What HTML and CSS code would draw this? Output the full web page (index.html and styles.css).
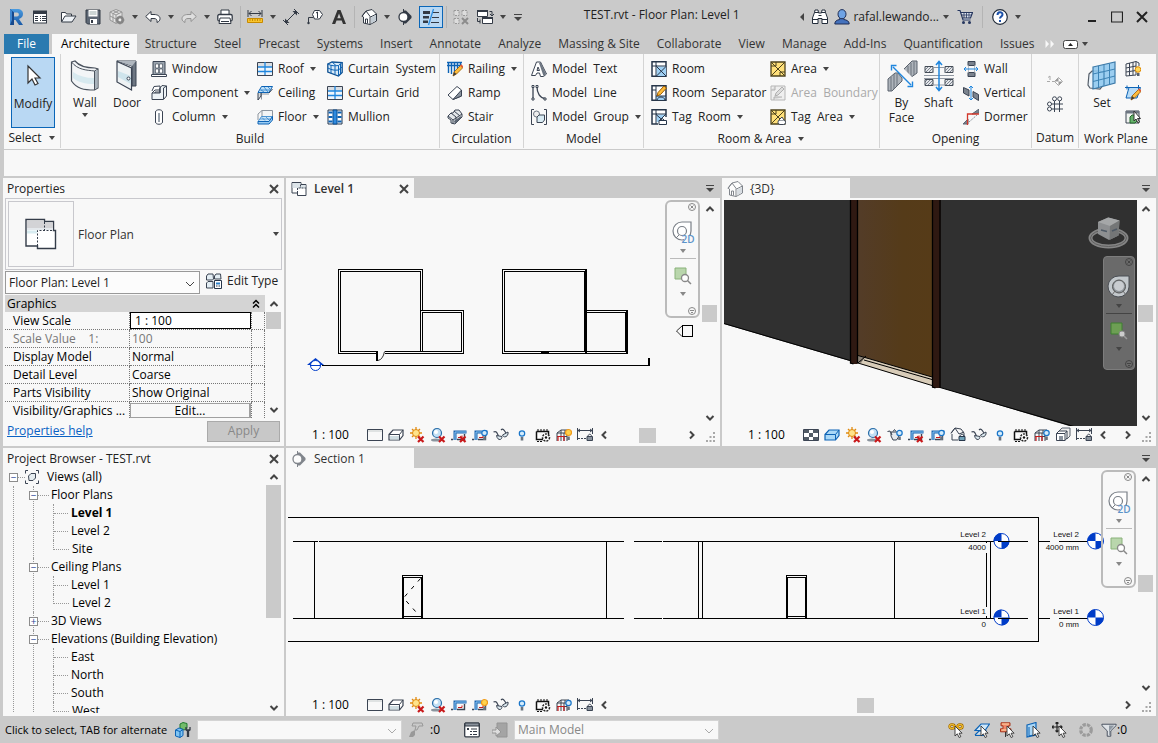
FILE: index.html
```html
<!DOCTYPE html>
<html lang="en">
<head>
<meta charset="utf-8">
<title>TEST.rvt - Floor Plan: Level 1</title>
<link rel="stylesheet" href="styles.css">
</head>
<body>
<svg class="sprite" aria-hidden="true">
  <defs>
    <linearGradient id="g-blue" x1="0" y1="0" x2="0" y2="1"><stop offset="0" stop-color="#4a9be0"/><stop offset="1" stop-color="#1b5ba8"/></linearGradient>
    <linearGradient id="g-door" x1="0" y1="0" x2="1" y2="0"><stop offset="0" stop-color="#533c28"/><stop offset="0.6" stop-color="#553b19"/><stop offset="1" stop-color="#563b18"/></linearGradient>
    <pattern id="hatch" width="3" height="3" patternUnits="userSpaceOnUse"><rect width="3" height="3" fill="#e4e6e9"/><path d="M0 3 3 0" stroke="#7c8490"/></pattern>
  </defs>

  <symbol id="caret" viewBox="0 0 8 8"><path d="M1 2h6L4 6z" fill="currentColor"/></symbol>
  <symbol id="caret-left" viewBox="0 0 8 8"><path d="M6 0v8L2 4z" fill="currentColor"/></symbol>
  <symbol id="chev-up" viewBox="0 0 10 10"><path d="M1.500 7 5 3.500 8.500 7" fill="none" stroke="currentColor" stroke-width="2"/></symbol>
  <symbol id="chev-down" viewBox="0 0 10 10"><path d="M1.500 3 5 6.500 8.500 3" fill="none" stroke="currentColor" stroke-width="2"/></symbol>
  <symbol id="chev-left" viewBox="0 0 10 10"><path d="M7 1.500 3.500 5 7 8.500" fill="none" stroke="currentColor" stroke-width="2"/></symbol>
  <symbol id="chev-right" viewBox="0 0 10 10"><path d="M3 1.500 6.500 5 3 8.500" fill="none" stroke="currentColor" stroke-width="2"/></symbol>
  <symbol id="thin-down" viewBox="0 0 10 10"><path d="M1 3 5 7 9 3" fill="none" stroke="currentColor"/></symbol>
  <symbol id="cross" viewBox="0 0 10 10"><path d="M1 1l8 8M9 1 1 9" stroke="currentColor" stroke-width="2"/></symbol>
  <symbol id="list-menu" viewBox="0 0 10 10"><path d="M1 2.500h8" stroke="currentColor"/><path d="M1 5h8L5 9z" fill="currentColor"/></symbol>
  <symbol id="grip" viewBox="0 0 10 10"><path d="M7 0h2v2H7zM7 4h2v2H7zM7 8h2v2H7zM3.500 4h2v2h-2zM3.500 8h2v2h-2zM0 8h2v2H0z" fill="#a8a8a8"/></symbol>

  <symbol id="logo" viewBox="0 0 16 18"><path d="M2 1h7c4 0 6 2 6 5s-2 4-4 5l4 6h-4L7.500 12H6v5H2zM6 4.500v4h3c2.500 0 2.500-4 0-4z" fill="url(#g-blue)"/><path d="M2 1l4 3.500V17H2z" fill="#17498c"/><path d="M2 1l2 2v9l-2 5z" fill="#3f86cf"/></symbol>
  <symbol id="props" viewBox="0 0 16 16"><rect x="1.500" y="2" width="13" height="12" fill="#fff" stroke="#333a45"/><path d="M1 2h14v3H1z" fill="#333a45"/><path d="M3 7h3v1H3zM3 9h3v1H3zM3 11h3v1H3zM8 7h1v1H8zM10 7h4v1h-4zM8 9h1v1H8zM10 9h4v1h-4zM8 11h1v1H8zM10 11h4v1h-4z" fill="#333a45"/></symbol>
  <symbol id="open" viewBox="0 0 18 16"><path d="M1.500 12.500v-9h4l1 1.500h5v2" fill="#fff" stroke="#333a45"/><path d="M1.500 13 5 7h11l-4 6z" fill="#eef2f6" stroke="#333a45"/></symbol>
  <symbol id="save" viewBox="0 0 16 16"><path d="M1 1h14v14H2.500L1 13.500z" fill="#5d6774" stroke="#333a45"/><path d="M3.500 1h9v6.500h-9z" fill="#fff"/><path d="M4.500 3h7M4.500 5h7" stroke="#9aa"/><path d="M5 10h7v5H5z" fill="#fff"/><path d="M6 11h2v3H6z" fill="#333a45"/></symbol>
  <symbol id="sync" viewBox="0 0 16 16"><path d="M7 .5 13 3v8l-6 3.500L1 11V3z" fill="#e4e4e4" stroke="#969696"/><path d="M1 3l6 3 6-3M7 6v8M4 1.500l6 3M10 1.500l-6 3v8M1 7l6 3 6-3" fill="none" stroke="#969696"/><circle cx="11" cy="11" r="3" fill="none" stroke="#858585" stroke-width="2"/><path d="M11 6.500v9M6.500 11h9M8 8l6 6M14 8l-6 6" stroke="#858585"/><circle cx="11" cy="11" r="1.200" fill="#eee"/></symbol>
  <symbol id="undo" viewBox="0 0 16 16"><path d="M6 2.500v3h3c4 0 6 2 6 4s-1 3-3 4c.5-3-1-4-3-4H6v3L.7 7.500z" fill="#fff" stroke="#333a45"/></symbol>
  <symbol id="redo" viewBox="0 0 16 16"><path d="M10 2.500v3H7c-4 0-6 2-6 4s1 3 3 4c-.5-3 1-4 3-4h3v3l5.300-5z" fill="#dedede" stroke="#939393"/></symbol>
  <symbol id="print" viewBox="0 0 16 16"><path d="M4 1h8v6H4z" fill="#fff" stroke="#333a45"/><rect x=".8" y="5.500" width="14.400" height="6.500" rx="1.500" fill="#fff" stroke="#333a45" stroke-width="1.300"/><path d="M3 9h10l1 5.500H2z" fill="#fff" stroke="#333a45"/><path d="M4 12.500h8" stroke="#333a45"/></symbol>
  <symbol id="measure" viewBox="0 0 16 16"><path d="M1 1v7M15 1v7M2 4.500h12M4.500 2 2 4.500 4.500 7M11.500 2 14 4.500 11.500 7" fill="none" stroke="#333a45"/><path d="M.500 9.500h15v4H.500z" fill="#f9c52e" stroke="#c88a00"/><path d="M3 10v2M5.500 10v2M8 10v2M10.500 10v2M13 10v2" stroke="#c88a00"/></symbol>
  <symbol id="dim" viewBox="0 0 16 16"><path d="M2.500 13.500l11-11M0 11l5 5M11 0l5 5" stroke="#333a45"/><path d="M2 14V9.500L6.500 14zM14 2H9.500L14 6.500z" fill="#333a45"/></symbol>
  <symbol id="tag" viewBox="0 0 16 16"><path d="M1.500 15V8.500h5" fill="none" stroke="#333a45"/><circle cx="1.500" cy="14" r="1.200" fill="#333a45"/><path d="M7.500 1.500h5l3 4-3 4.500h-5l-2-4.500z" fill="#fff" stroke="#333a45"/><path d="M9 4l1.500-1v6" fill="none" stroke="#333a45"/></symbol>
  <symbol id="text-a" viewBox="0 0 16 16"><path fill-rule="evenodd" d="M6.500 1h3L15 15h-3l-1.300-3.500H5.500L4.200 15H1zM8 4.500 6.300 9.300h3.500z" fill="#333"/></symbol>
  <symbol id="house" viewBox="0 0 16 16"><path d="M1 7l4-5 6-1.500L15.500 5v7L9 15.500 2.500 14V8z" fill="#fff" stroke="#333a45"/><path d="M1 7.500 5 2l4.500 6M9.500 8l6-3M9 8v7.500" fill="none" stroke="#333a45"/><path d="M10 8.500 15 6v5.500l-5 3z" fill="#c3ccd4"/><path d="M4.500 14v-4h2v4.500" fill="none" stroke="#333a45"/></symbol>
  <symbol id="section" viewBox="0 0 16 16"><path d="M7 1.500h2L14.500 7v2L9 14.500H7z" fill="#333a45"/><circle cx="6.500" cy="8" r="4.500" fill="#fff" stroke="#333a45" stroke-width="1.300"/><path d="M6.500 0v3M6.500 13v3" stroke="#333a45"/></symbol>
  <symbol id="thin" viewBox="0 0 18 16"><path d="M1 2h7v3H1zM1 7h6v2.500H1zM1 11.500h5v2.500H1z" fill="#333a45"/><path d="M11 3.500h6M10 8.500h7M9 13.500h8" stroke="#333a45"/><path d="M11.500 0 6.500 16" stroke="#2a8de0" stroke-width="1.300"/></symbol>
  <symbol id="hidden-win" viewBox="0 0 16 16"><path d="M1 1.500h5v5H1zM9 1.500h5v5H9zM1 9.500h5v5H1z" fill="#ddd" stroke="#999" stroke-dasharray="2 1"/><path d="M9 9l6 6M15 9l-6 6" stroke="#8c8c8c" stroke-width="2"/></symbol>
  <symbol id="switch-win" viewBox="0 0 18 16"><path d="M1.500 1.500h10v6h-10z" fill="#fff" stroke="#333a45"/><path d="M1 1h11v2H1z" fill="#333a45"/><path d="M6.500 8.500h10v6h-10z" fill="#fff" stroke="#333a45"/><path d="M6 8h11v2H6z" fill="#333a45"/><path d="M13.500 2.500H16V6M14 5l2 2 2-2M4 12.500H1.500V9M4 10.500v4" fill="none" stroke="#333a45"/></symbol>
  <symbol id="binoc" viewBox="0 0 16 16"><path d="M2.500 3.500 3 1h3l.5 3h3L10 1h3l.5 2.500L15.500 9v5.500h-5.500V9.500H6v5H.500V9z" fill="#fff" stroke="#222c3a"/><path d="M.5 10.500H6M10 10.500h5.500M2.500 3.500h4M9.500 3.500h4M6.500 6.500h3" stroke="#222c3a"/></symbol>
  <symbol id="user" viewBox="0 0 16 16"><path d="M.8 15c0-3 2-4 5-4.500V9h4v1.500c3 .5 5.400 1.500 5.400 4.500z" fill="#4472bd" stroke="#1f2d55"/><ellipse cx="8" cy="5.200" rx="4" ry="4.600" fill="#6fa3e4" stroke="#1f2d55"/></symbol>
  <symbol id="cart" viewBox="0 0 16 16"><path d="M.500 1.500h2.500l3 9.500h7.500M3.500 3.500h12l-2 5.500H5.500" fill="#dfe7f2" stroke="#26365e" stroke-width="1.200"/><path d="M4.500 6h10M7 4v5M9.500 4v5M12 4v5" stroke="#26365e" stroke-width=".8"/><circle cx="6.500" cy="13.500" r="1.500" fill="#26365e"/><circle cx="12.500" cy="13.500" r="1.500" fill="#26365e"/></symbol>
  <symbol id="help" viewBox="0 0 16 16"><circle cx="8" cy="8" r="7.300" fill="#fff" stroke="#222c3a" stroke-width="1.200"/><path d="M5.500 6c0-3.500 5-3.500 5-.5 0 2-2.500 2-2.500 4" fill="none" stroke="#1b50a8" stroke-width="2"/><path d="M7 11h2v2H7z" fill="#1b50a8"/></symbol>
  <symbol id="w-min" viewBox="0 0 12 12"><path d="M2 10h8" stroke="#222" stroke-width="2"/></symbol>
  <symbol id="w-max" viewBox="0 0 12 12"><path d="M.500 1h11v10H.500z" fill="none" stroke="#222" stroke-width="1.200"/></symbol>
  <symbol id="w-close" viewBox="0 0 12 12"><path d="M1 1l10 10M11 1 1 11" stroke="#222" stroke-width="2"/></symbol>
  <symbol id="more" viewBox="0 0 10 10"><path d="M.5 1 4 5 .5 9M5.500 1 9 5 5.500 9" fill="#f8f8f8"/></symbol>
  <symbol id="collapse" viewBox="0 0 15 9"><rect x=".5" y=".5" width="14" height="8" rx="2" fill="#fff" stroke="#444"/><path d="M5 6h5L7.500 3z" fill="#222"/></symbol>

  <symbol id="cursor" viewBox="0 0 32 32"><path d="M11 5v17l4-4 3 6 3-1.500-3-5.500h5z" fill="#fff" stroke="#333" stroke-width="1.200"/></symbol>
  <symbol id="wall" viewBox="0 0 32 32"><path d="M2.500 2 6 1c5 6 12 7 20 7l3 1v19l-3.500 2C15 30 8 29 2.500 21z" fill="#f3f5f7" stroke="#4a525d" stroke-width="1.200"/><path d="M2.500 2C9 10 17 10 25.500 11v19M25.500 11 29 9" fill="none" stroke="#4a525d"/><path d="M26 11.500l2.500-1.500v17.500L26 29z" fill="#a9b3bc"/><path d="M4 12c6 4 13 6 21 6v6c-9 0-16-2-21-6z" fill="#d7e9ef"/></symbol>
  <symbol id="door" viewBox="0 0 32 32"><path d="M6 1h19v25h-4V6z" fill="#6d7682" stroke="#3b4453"/><path d="M6 1h19l-4 5z" fill="#b0b7bf"/><path d="M6 1.500 20.500 8v22L6 22z" fill="#eef2f4" stroke="#3b4453" stroke-width="1.200"/><path d="M7 11l13 5v8L7 17z" fill="#cfe4ec"/><circle cx="17.500" cy="18.500" r="1.500" fill="#fff" stroke="#3b4453"/></symbol>
  <symbol id="window" viewBox="0 0 16 16"><path d="M2 .5h12v13H2z" fill="#9ba4ae" stroke="#3b4453"/><path d="M4.500 3h3v4h-3zM8.500 3h3v4h-3zM4.500 8h3v4h-3zM8.500 8h3v4h-3z" fill="#fff" stroke="#3b4453" stroke-width=".6"/><path d="M.500 13.500h15v2H.500z" fill="#fff" stroke="#3b4453"/></symbol>
  <symbol id="component" viewBox="0 0 16 16"><path d="M1 6l2-4.500 6-.5v6H4v3" fill="#fff" stroke="#3b4453"/><path d="M9 3l2-2.500 4.500.5v10l-3 3.500H1V8h8z" fill="#eef3f6" stroke="#3b4453"/><path d="M9 8V3M12.500 14V3l3-2M1 8l3-3h5" fill="none" stroke="#3b4453"/></symbol>
  <symbol id="column" viewBox="0 0 16 16"><path d="M4.500 3c0-3 7-3 7 0v10c0 3-7 3-7 0z" fill="#fff" stroke="#3b4453"/><path d="M7 4h2v9H7z" fill="#9aa3ad"/></symbol>
  <symbol id="roof" viewBox="0 0 16 16"><path d="M.500 1.500h15v13H.500z" fill="#eff5fb" stroke="#3b4453"/><path d="M1 2h14v4H1z" fill="#d9dee3"/><path d="M8 1v13M1 6h14M1 10.500h14" stroke="#1f86de" stroke-width="1.300"/></symbol>
  <symbol id="ceiling" viewBox="0 0 16 16"><path d="M4.500 7v7.500M1 14.500 4.500 9H12" fill="none" stroke="#8d959e"/><path d="M4.500 1.500h11L12 7.500H1z" fill="#bfe0f8" stroke="#0d63b5"/><path d="M1 8v7l3-4V8M12 8l3.500-4" fill="#d5dade" stroke="#3b4453"/><path d="M4 5l3 2M7 2l4 5M11 2l2 2M3 5h10" stroke="#2a7fc9" stroke-width=".8"/></symbol>
  <symbol id="floor" viewBox="0 0 16 16"><path d="M5 8V1.500h10.500V8" fill="#f3f5f6" stroke="#8d959e"/><path d="M5 1.500 1 5v6" fill="none" stroke="#8d959e"/><path d="M4.500 7.500h11L12 12.500H1z" fill="#cfe7f9" stroke="#2a7fc9" stroke-width=".8"/><path d="M1 12.500v2.500h11l3.500-4V7.500L12 12.500z" fill="#9ccdf3" stroke="#0d63b5"/><path d="M5 8.500l3 3M9 8l3 3M3 10h10" stroke="#2a7fc9" stroke-width=".7"/></symbol>
  <symbol id="curtain-system" viewBox="0 0 16 16"><path d="M.8 3 5 1l10.200.5v10L11.500 15 .8 11z" fill="#d9ebf9" stroke="#0d4f90" stroke-width="1.300"/><path d="M.8 3C4 5 8 5 11.500 4.500V15M11.500 4.500 15 1.500M4 4v8.500M8 5v8.500M1 7c3 2 7 2.500 10.500 2L15 6M13.500 3v10M5 1l4 3.500" fill="none" stroke="#0d63b5"/></symbol>
  <symbol id="mullion" viewBox="0 0 16 16"><path d="M1 1h14v14H1z" fill="#fff" stroke="#22344c"/><path d="M6 1h4v14H6z" fill="#2f8be0" stroke="#0d4f90"/><path d="M1.500 3.500h4M10.500 3.500h4M1.500 8h4M10.500 8h4M1.500 12.500h4M10.500 12.500h4" stroke="#0d63b5" stroke-width="2"/></symbol>
  <symbol id="pencil" viewBox="0 0 16 16"><path d="M6 15l1-4 6.500-6.500 2.500 2L9.500 13z" fill="#ffbd3c" stroke="#9a5b00" stroke-width=".8"/><path d="M6 15l1-4 2.500 2z" fill="#3b3b3b"/><path d="M13 4.500l1.300-1.200 2 2L15 7z" fill="#e05a3a"/></symbol>
  <symbol id="railing" viewBox="0 0 16 16"><path d="M0 1.500h15M0 4.500h15M1.500 2v10M4.500 2v11M7.500 2v9M10.500 2v6M13.500 2v4" stroke="#0d63b5" stroke-width="1.400"/><use href="#pencil"/></symbol>
  <symbol id="ramp" viewBox="0 0 16 16"><path d="M1 10 10 1.500 14.500 5v6L6 14.500z" fill="#fff" stroke="#3b4453"/><path d="M6 14.500 14.500 5v6z" fill="#8a939e" stroke="#3b4453"/></symbol>
  <symbol id="stair" viewBox="0 0 16 16"><path d="M1 7l3-3h2l2-3h4l3 4v3l-7 7-4-1v-3l-3-2z" fill="#e3e7ea" stroke="#3b4453"/><path d="M4 4l5 4M1 7l5 4M7 2l6 5M6 11l9-6M9 8v4M6 11v4" stroke="#3b4453"/><path d="M7 12l7-5v2l-6 6z" fill="#5d6774"/></symbol>
  <symbol id="model-text" viewBox="0 0 16 16"><path fill-rule="evenodd" d="M5.500 1h4l6 12-3 2.500h-3L8.500 12H6l-1.500 2.500H.500zM7 6l-1 3.500h2.500z" fill="#fff" stroke="#3b4453"/><path d="M9.500 1.500 15 13l-2.500 2L8 2z" fill="#6d7682"/></symbol>
  <symbol id="model-line" viewBox="0 0 16 16"><path d="M2 2.500V13M6 2c0 6 3 11 8 11.500" fill="none" stroke="#3b4453" stroke-width="1.300"/><path d="M1 .5h2v2H1zM1 13h2v2H1zM5 .5h2v2H5zM13 13h2v2h-2z" fill="#fff" stroke="#3b4453"/></symbol>
  <symbol id="model-group" viewBox="0 0 16 16"><path d="M3 .500H.500v15H3M13 .500h2.500v15H13" fill="none" stroke="#3b4453"/><circle cx="5.500" cy="5" r="3" fill="#eee" stroke="#6d7682"/><path d="M6 8l2-2h5.500v5l-2 2.500H6z" fill="#d9ebf3" stroke="#3b4453"/></symbol>
  <symbol id="room" viewBox="0 0 16 16"><path d="M1 .8h14v14.400H1z" fill="#fff" stroke="#27364a" stroke-width="1.500"/><path d="M5.500 5.500H15V15H5.500z" fill="#9fd0f4"/><path d="M5 1v14M1 5h5M5 5h10M5.500 5.500 15 15M15 5.500 5.500 15" stroke="#27364a"/></symbol>
  <symbol id="room-sep" viewBox="0 0 16 16"><path d="M1 .8h14v14.400H1z" fill="#fff" stroke="#27364a" stroke-width="1.500"/><path d="M5 11h9v4H5z" fill="#9fd0f4"/><path d="M5 1v14M1 5h4M5 11h10M6 15c1-4 7-4 8 0" fill="none" stroke="#27364a"/><path d="M6 11l1-3.500L13 1l2.500 2L9.500 9.500z" fill="#ffbd3c" stroke="#9a5b00"/></symbol>
  <symbol id="tag-room" viewBox="0 0 16 16"><path d="M7 15H1V.8h14V8" fill="#fff" stroke="#27364a" stroke-width="1.500"/><path d="M5.500 5.500H15l-7 7-2.500 1z" fill="#9fd0f4"/><path d="M5 1v14M1 5h5M5 5h10M5 5.500l7 6M15 5 8 12" stroke="#27364a"/><path d="M8 11.500h7.500v4H8zM10 11.500l1.500-2 2 2" fill="#fff" stroke="#27364a"/></symbol>
  <symbol id="area" viewBox="0 0 16 16"><path d="M1 1h14v14H1z" fill="#ffe07a" stroke="#4d431d" stroke-width="1.300"/><path d="M1 1l14 14M15 1 1 15M1 5h5V1M15 11h-5v4" fill="none" stroke="#4d431d"/></symbol>
  <symbol id="area-b" viewBox="0 0 16 16"><path d="M1 1h14v14H1z" fill="#efefef" stroke="#b5b5b5"/><path d="M1 5h4V1M4 15v-3h8M5 11l1-3 6-6 2 2-6 6z" fill="#ddd" stroke="#b0b0b0"/></symbol>
  <symbol id="tag-area" viewBox="0 0 16 16"><path d="M1 1h14v14H1z" fill="#ffe07a" stroke="#4d431d" stroke-width="1.300"/><path d="M1 1l12 12M15 1 1 15M1 5h5V1" fill="none" stroke="#4d431d"/><rect x="8" y="11" width="7.500" height="4.500" rx="2" fill="#fff" stroke="#3b4453"/><path d="M9 11l3-3 2 3" fill="#fff" stroke="#3b4453"/></symbol>
  <symbol id="by-face" viewBox="0 0 32 32"><path d="M18 12V9l8-8h5v12l-7 5zM2 31V19l7-6h3l4 5v3L6 31z" fill="#aeb4bb" stroke="#59616c"/><path d="M22 6v11M25 3v14M28 2v13M5 17v14M8 14v15M11 14v12" stroke="#6b737d"/><path d="M13 12l4-4 10 10-5 5z" fill="#f8f8f8"/><path d="M7 7l18 18M5.500 10.500v-5h5M21.500 26.500h5v-5" fill="none" stroke="#1f86de" stroke-width="1.400"/></symbol>
  <symbol id="shaft" viewBox="0 0 32 32"><path d="M2 6.500h8v6H2zM22 6.500h8v6h-8zM2 19.500h8v6H2zM22 19.500h8v6h-8z" fill="url(#hatch)" stroke="#444c57"/><path d="M10 7v6M22 7v6M1 15.500h30M1 18.500h30M10 7.500h12M10 25h12" stroke="#9299a3"/><path d="M16 2v28M13 5l3-3.500L19 5M13 27l3 3.500 3-3.500" fill="none" stroke="#1f86de" stroke-width="1.500"/></symbol>
  <symbol id="op-wall" viewBox="0 0 16 16"><path d="M5 .500h7v4H5zM5 11.500h7v4H5z" fill="#7b838e" stroke="#3b4453"/><path d="M5.500 4.500v7M11.500 4.500v7" stroke="#b8bec5"/><path d="M1 8h14M3 6 1 8l2 2M13 6l2 2-2 2" fill="none" stroke="#1f86de"/></symbol>
  <symbol id="op-vert" viewBox="0 0 16 16"><path d="M.500 2.500 6 5v6L.500 8zM10 6.500l5.500 3v6L10 12z" fill="#7b838e" stroke="#3b4453"/><path d="M8 1v14M6 3l2-2 2 2M6 13l2 2 2-2" fill="none" stroke="#1f86de"/></symbol>
  <symbol id="dormer" viewBox="0 0 16 16"><path d="M0 15l5-5v5zM9 5l7-5v4z" fill="#7b838e" stroke="#5d6774"/><path d="M4.500 16V5H16" fill="none" stroke="#d2372a" stroke-width="1.300"/><path d="M6 13l8-7" stroke="#8a929c" stroke-dasharray="2 1"/></symbol>
  <symbol id="level" viewBox="0 0 16 16"><path d="M1 5.500 3 4v4M0 9.500h3M5 9.500h3" fill="none" stroke="#aaa"/><path d="M11.500 5.500 15.500 9.500l-4 4-4-4z" fill="#fff" stroke="#aaa"/><path d="M11.500 5.500v4h-4zM11.500 13.500v-4h4z" fill="#999"/></symbol>
  <symbol id="grid-i" viewBox="0 0 16 16"><path d="M7.500 5v11M12.500 5v11M4 8h12M4 13h12" stroke="#3b4453"/><circle cx="7.500" cy="2.800" r="2" fill="#fff" stroke="#3b4453"/><circle cx="12.700" cy="2.800" r="2" fill="#fff" stroke="#3b4453"/><circle cx="2.500" cy="8" r="2" fill="#fff" stroke="#3b4453"/><circle cx="2.500" cy="13" r="2" fill="#fff" stroke="#3b4453"/></symbol>
  <symbol id="set" viewBox="0 0 32 32"><path d="M3 14l3-3h8l4 2v11l-4 5-10-1-2-3z" fill="#eaf3fa" stroke="#555e69" stroke-width="1.200"/><path d="M7 7 29 2v21L7 29z" fill="#8cc7ef" fill-opacity=".85" stroke="#3d7aa8" stroke-width="1.200"/><path d="M12.500 6v21.500M18 5v21M23.500 3.500V25M7 14l22-5M7 21.500l22-5.500" stroke="#3c83b5"/></symbol>
  <symbol id="wp-show" viewBox="0 0 16 16"><path d="M1 3l10-2.500V14L1 15zM4.500 2v13M8 1v13M1 7l10-2M1 11l10-1.500M11 .5 14 2v3" fill="none" stroke="#3b4453"/><circle cx="13" cy="8.500" r="2.800" fill="#ffd95a" stroke="#e08a00"/><path d="M12 12h2.500v3H12z" fill="#59616c"/></symbol>
  <symbol id="wp-ref" viewBox="0 0 16 16"><path d="M4 2.500h11.500L12 13H1z" fill="#b7dcf7" stroke="#0d63b5"/><path d="M2 .500v4M0 2.500h4M13.500 0v4" stroke="#0d63b5"/><use href="#pencil"/></symbol>
  <symbol id="wp-view" viewBox="0 0 16 16"><path d="M1 2h13v12H1z" fill="#f0f3f0" stroke="#3b4453"/><path d="M1 2h13v2.500H1z" fill="#6d7682"/><path d="M5 8l2-2h5v6l-2 2H5z" fill="#67b36c" stroke="#23662b"/><path d="M9 2v10l2-2 2 4 1.500-1-2-3.500h3z" fill="#fff" stroke="#333"/></symbol>

  <symbol id="floorplan" viewBox="0 0 16 16"><path d="M1 1.500h9v2h5v11H6.500V12H1z" fill="#fff" stroke="#3b4453"/><path d="M1.500 2h8v2h5v3h-13z" fill="#dce4e9"/><path d="M6.500 12V7h8.500M9.500 3.500V7" fill="none" stroke="#3b4453" stroke-dasharray="2 1"/></symbol>
  <symbol id="floorplan-lg" viewBox="0 0 32 32"><path d="M1 1.500h18.500v2h9v9h2V30.500H12.500V28H1z" fill="#fff" stroke="#343c49" stroke-width="1.400"/><path d="M2 2.500h17v2h9V10H2z" fill="#d3d3d6"/><path d="M2 10h26v2H2z" fill="#e4e8ec"/><path d="M2 12.500h10v3H2z" fill="#d8ecf1"/><path d="M12.500 28V12.500H30M19.500 4v8" fill="none" stroke="#343c49" stroke-dasharray="2 1.500"/></symbol>
  <symbol id="edit-type" viewBox="0 0 16 16"><path d="M.500 3 2 1h5l.5 5-1 1H.500zM8.500 3 10 1h4.500l.5 5H8.500zM.500 10 2 8.500h5V15H.500z" fill="#e4eef4" stroke="#3b4453"/><path d="M8.500 7.500h7v8h-7z" fill="#fff" stroke="#27364a"/><path d="M10 9.500h4v2h-4z" fill="#2a7fc9"/><path d="M10 13h4" stroke="#27364a" stroke-dasharray="1 .5"/></symbol>
  <symbol id="views-root" viewBox="0 0 14 14"><path d="M3 .500H.500v3M11 .500h2.500v3M3 13.500H.500v-3M11 13.500h2.500v-3" fill="none" stroke="#3b4453"/><path d="M3.500 6 6 3.500h4.500V8L8 10.500H4z" fill="#e6edf0" stroke="#3b4453"/></symbol>
  <symbol id="dbl-up" viewBox="0 0 8 10"><path d="M1 4.500 4 1.500l3 3M1 8.500l3-3 3 3" fill="none" stroke="#000" stroke-width="1.500"/></symbol>

  <symbol id="redx" viewBox="0 0 16 16"><path d="M9 9.500l5.500 5.500M14.500 9.500 9 15" stroke="#c8191b" stroke-width="2.200"/></symbol>
  <symbol id="bulb-s" viewBox="0 0 16 16"><circle cx="12.500" cy="6" r="2.700" fill="#d5ecfb" stroke="#1875c9" stroke-width="1.200"/><path d="M11.200 9.500h2.600v3.500h-2.600z" fill="#69727d"/></symbol>
  <symbol id="bulb-y" viewBox="0 0 16 16"><circle cx="12.500" cy="5.500" r="3" fill="#ffd34d" stroke="#f09a1a" stroke-width="1.200"/><path d="M11.200 9.500h2.600v3.500h-2.600z" fill="#69727d"/></symbol>
  <symbol id="v-detail" viewBox="0 0 16 16"><path d="M.500 2.500h15v11H.500z" fill="#f8f8f8" stroke="#3b4453"/><path d="M1 3h14v2H1z" fill="#dfe2e2"/></symbol>
  <symbol id="v-fine" viewBox="0 0 16 16"><path d="M.500 2.500h15v11H.500z" fill="#fff" stroke="#3b4453"/><path d="M1 3h5v3H1zM10 3h5v3h-5zM6 6h4v4H6zM1 10h5v3H1zM10 10h5v3h-5z" fill="#535c67"/></symbol>
  <symbol id="v-style" viewBox="0 0 16 16"><path d="M1 7.500 5 3h10v5.500L11.500 13H1z" fill="#fff" stroke="#3b4453" stroke-width="1.200"/><path d="M1 7.500h10.500V13M11.500 7.500 15 3" fill="none" stroke="#3b4453"/><path d="M2 9h9v3.500H2z" fill="#cfdde2"/></symbol>
  <symbol id="v-style-b" viewBox="0 0 16 16"><path d="M1 7.500 5 3h10v5.500L11.500 13H1z" fill="#a9d8f7" stroke="#0d63b5" stroke-width="1.200"/><path d="M1 7.500h10.500V13M11.500 7.500 15 3" fill="none" stroke="#0d63b5"/></symbol>
  <symbol id="v-sun" viewBox="0 0 16 16"><path d="M7 0v12M1 6h12M3 2l8 8M11 2l-8 8" stroke="#e08a10" stroke-width="1.300"/><circle cx="7" cy="6" r="3.500" fill="#ffe48a" stroke="#e08a10"/><use href="#redx"/></symbol>
  <symbol id="v-shadow" viewBox="0 0 16 16"><ellipse cx="6" cy="13" rx="5" ry="1.500" fill="#8b949e"/><circle cx="7" cy="6" r="4.500" fill="#c3e0f5" stroke="#2b6ea8" stroke-width="1.200"/><circle cx="6" cy="5" r="2" fill="#fff"/><use href="#redx"/></symbol>
  <symbol id="v-crop" viewBox="0 0 16 16"><path d="M4 13V5h11.500" fill="none" stroke="#1b64b0" stroke-width="3"/><path d="M4 13V5h11" fill="none" stroke="#8fcaf5"/><path d="M0 12.500h2M6 12.500h7.500V7" fill="none" stroke="#3b4453" stroke-width="1.400"/><path d="M7 10.500h4v-2" fill="none" stroke="#c8191b"/></symbol>
  <symbol id="v-crop-x" viewBox="0 0 16 16"><use href="#v-crop"/><use href="#redx"/></symbol>
  <symbol id="v-crop-b" viewBox="0 0 16 16"><use href="#v-crop"/><use href="#bulb-s"/></symbol>
  <symbol id="v-crop-y" viewBox="0 0 16 16"><use href="#v-crop"/><use href="#bulb-y"/></symbol>
  <symbol id="v-glasses" viewBox="0 0 16 16"><path d="M.500 5c3-1.500 3.500 1 5 4M8 3c2-2 3 0 5 3" fill="none" stroke="#3b4453" stroke-width="1.200"/><path d="M3.500 8.500 9 9.500c0 4-4.500 4.500-5.500-1zM9.500 8l5.500-3c1 4-4 7-5.500 3z" fill="#dbe8ee" stroke="#3b4453"/></symbol>
  <symbol id="v-bulb" viewBox="0 0 16 16"><circle cx="8" cy="6.500" r="2.700" fill="#d5ecfb" stroke="#1875c9" stroke-width="1.200"/><path d="M6.700 10h2.600v3.500H6.700z" fill="#69727d"/></symbol>
  <symbol id="v-temp" viewBox="0 0 16 16"><path d="M1.500 4.500h12V8M1.500 4.500v8H8" fill="#fff" stroke="#111" stroke-width="1.500"/><path d="M2 3h12M2 14.500h6" stroke="#111" stroke-dasharray="2 1"/><circle cx="11" cy="10.500" r="3.500" fill="#fff" stroke="#222" stroke-width="1.500" stroke-dasharray="2 1"/><circle cx="11" cy="10.500" r="1.200" fill="#111"/></symbol>
  <symbol id="v-anal" viewBox="0 0 16 16"><path d="M1 14V6l4-3h8l-2 3v8M5 6v8M8 6v8M1 6h10M1 9.500h10M5 3v3M9 3v3" fill="none" stroke="#3b4453"/><path d="M2 14V9.500h6V14" fill="none" stroke="#c8191b" stroke-width="1.200"/></symbol>
  <symbol id="v-anal-b" viewBox="0 0 16 16"><use href="#v-anal"/><use href="#bulb-s"/></symbol>
  <symbol id="v-anal-y" viewBox="0 0 16 16"><use href="#v-anal"/><use href="#bulb-y"/></symbol>
  <symbol id="v-constr" viewBox="0 0 16 16"><path d="M.500 1v12M15.500 1v6M1 3.500h14M3 2 1 3.500 3 5M13 2l2 1.500L13 5" fill="none" stroke="#3b4453"/><path d="M1 11.500h8" stroke="#3b4453" stroke-dasharray="2 1"/><path d="M10 9.500h5.500v4H10z" fill="#8a939e" stroke="#3b4453"/><path d="M11 9.500c0-3 3.500-3 3.500 0" fill="none" stroke="#3b4453"/></symbol>
  <symbol id="v-render" viewBox="0 0 16 16"><path d="M.500 4.500 3 4l2 4M4 5h7l.5 5-2 3H6L4 9zM6 4.500l1.500-2 1.500 2" fill="#e6e9ec" stroke="#3b4453"/><use href="#bulb-s"/></symbol>
  <symbol id="v-lock" viewBox="0 0 16 16"><path d="M1 6l4-5 6 1 3 4v5M2 7v6h6M1 6.500 5 1l4 6M9 7l5-2" fill="none" stroke="#3b4453"/><path d="M9 9.500h6v4H9z" fill="#6fa2b8" stroke="#27364a"/><path d="M10 9.500c0-3 4-3 4 0" fill="none" stroke="#27364a"/></symbol>
  <symbol id="v-disp" viewBox="0 0 16 16"><path d="M4 4l3-3h8v8l-3 3" fill="#eee" stroke="#59616c"/><path d="M1.500 6.500 4 4h8v7l-2 2.500H1.500z" fill="#fff" stroke="#3b4453"/><path d="M1.500 6.500H10v7M10 6.500 12 4" fill="none" stroke="#3b4453"/><path d="M4 9h4v4H4z" fill="#8a939e"/></symbol>

  <symbol id="wheel" viewBox="0 0 24 24"><path d="M11 2h9v9a9 9 0 1 1-9-9z" fill="#fff" stroke="#7b8088" stroke-width="1.200"/><circle cx="11" cy="11" r="4.500" fill="#fff" stroke="#7b8088" stroke-width="1.200"/><path d="M8 15l-3 3" stroke="#7b8088"/><path d="M13 15h11v9H13z" fill="#f8f8f8"/></symbol>
  <symbol id="wheel-3d" viewBox="0 0 24 24"><path d="M12 1h10v11A10.500 10.500 0 1 1 12 1z" fill="#c3c8cc" stroke="#4b4f55"/><circle cx="12" cy="11.500" r="6.500" fill="#8f959b" stroke="#555"/><circle cx="12" cy="11" r="5" fill="#c9ccd0"/><path d="M8 16l-3 4M16 16l3 4" stroke="#666"/></symbol>
  <symbol id="zoomregion" viewBox="0 0 18 18"><path d="M1 1h11v11H1z" fill="#b9d6ac" stroke="#8ab27a"/><circle cx="11" cy="11" r="3.500" fill="#fff" stroke="#888" stroke-width="1.300"/><path d="M13.500 13.500l3.500 3.500" stroke="#888" stroke-width="1.500"/></symbol>
  <symbol id="zoomregion-d" viewBox="0 0 18 18"><path d="M1 1h11v11H1z" fill="#6d9e54" stroke="#3f7f31"/><circle cx="12" cy="12" r="3" fill="#ccc" stroke="#888"/><path d="M14 14l3 3" stroke="#999" stroke-width="1.500"/></symbol>
  <symbol id="nav-x" viewBox="0 0 8 8"><circle cx="4" cy="4" r="3.500" fill="none" stroke="currentColor"/><path d="M2.500 2.500l3 3M5.500 2.500l-3 3" stroke="currentColor"/></symbol>
  <symbol id="nav-min" viewBox="0 0 8 8"><circle cx="4" cy="4" r="3.500" fill="none" stroke="currentColor"/><path d="M2 3.500h4M3 5.500h2" stroke="currentColor"/></symbol>

  <symbol id="worksets" viewBox="0 0 16 16"><path d="M5 2l3-1.500 4 1v5L9 8 5 6z" fill="#72bb6b" stroke="#1f7a2e"/><path d="M.500 8 4 6l4 1.500v6L5 15.500.500 14z" fill="#7fc4f2" stroke="#0d63b5"/><path d="M.500 8 5 9.500 8 7.500M5 9.500v6" fill="none" stroke="#0d63b5"/><path d="M11 5v3l1.500 1v6M15 5v3l-1.500 1v6M11 8h4" fill="none" stroke="#333a45" stroke-width="1.300"/></symbol>
  <symbol id="editable" viewBox="0 0 16 16"><path d="M5 1h9l1 3h-4l-2 4H7l1-4H4z" fill="#c9c9c9" stroke="#999"/><path d="M1 15l2-5 4-2v5l-2 2z" fill="#999"/></symbol>
  <symbol id="options" viewBox="0 0 16 16"><rect x=".7" y="1.200" width="14.600" height="13.600" rx="1" fill="#fff" stroke="#333a45" stroke-width="1.300"/><path d="M1 1h14v3H1z" fill="#8a929c" stroke="#333a45"/><path d="M3 6h2v2H3zM6 9h2v1H6zM6 12h2v1H6zM7 6.500h6v1H7zM9 9h4v1H9zM9 12h4v1H9z" fill="#333a45"/></symbol>
  <symbol id="pick-opt" viewBox="0 0 16 16"><path d="M5 1h10v14H5z" fill="#a4a4a4" stroke="#949494"/><path d="M0 8h4V5l5 5-5 4v-3H0z" fill="#ddd" stroke="#949494"/></symbol>
  <symbol id="arrow-over" viewBox="0 0 16 16"><path d="M7 4v10l2.300-2.200 1.800 3.700 1.700-.8-1.700-3.500h3z" fill="#fff" stroke="#333" stroke-width=".9"/></symbol>
  <symbol id="s-link" viewBox="0 0 16 16"><rect x="1.500" y="2.500" width="5" height="4" rx="2" fill="none" stroke="#a86d00" stroke-width="2.400"/><rect x="9.500" y="2.500" width="5" height="4" rx="2" fill="none" stroke="#a86d00" stroke-width="2.400"/><rect x="1.500" y="2.500" width="5" height="4" rx="2" fill="none" stroke="#ffd23c"/><rect x="9.500" y="2.500" width="5" height="4" rx="2" fill="none" stroke="#ffd23c"/><path d="M5 4.500h6" stroke="#e0a010" stroke-width="2"/><use href="#arrow-over"/></symbol>
  <symbol id="s-under" viewBox="0 0 16 16"><path d="M1 8.500 7 2h8.500L11 8.500zM1 13l4-4h8M1 13.500h9" fill="#cfe7f9" stroke="#0d63b5" stroke-width="1.200"/><use href="#arrow-over"/></symbol>
  <symbol id="s-pin" viewBox="0 0 16 16"><path d="M1 .8h9v3H8.500v3H11v3H.500v-3H3v-3H1z" fill="#f0876a" stroke="#a8361b"/><path d="M2 2h7M1.500 8h8" stroke="#ffd9a6"/><path d="M5.500 10v5" stroke="#333"/><use href="#arrow-over"/></symbol>
  <symbol id="s-face" viewBox="0 0 16 16"><path d="M1 3l9-2.500V13L1 15z" fill="#a9d6f5" stroke="#0d63b5" stroke-width="1.200"/><path d="M3 5v9M3 14l9-2" stroke="#0d63b5"/><use href="#arrow-over"/></symbol>
  <symbol id="s-drag" viewBox="0 0 16 16"><path d="M5 0v10M0 5h10M3.500 1.500 5 0l1.500 1.500M3.500 8.500 5 10l1.500-1.500M1.500 3.500 0 5l1.500 1.500M8.500 3.500 10 5 8.500 6.500" fill="none" stroke="#222" stroke-width="1.200"/><use href="#arrow-over"/></symbol>
  <symbol id="s-spin" viewBox="0 0 16 16"><circle cx="8" cy="8" r="5.300" fill="none" stroke="#9b9b9b" stroke-width="3.200" stroke-dasharray="3.200 1"/></symbol>
  <symbol id="s-filter" viewBox="0 0 18 16"><path d="M1 1.500h16v1.500l-6 6v6H7V9L1 3z" fill="#dfe3e7" stroke="#3b4453"/><path d="M9 3h6l-5 5.500V14H9z" fill="#8e98a2"/></symbol>
</svg>

<header class="titlebar">
  <div class="qat">
    <button class="tb" aria-label="Application menu"><svg class="i18"><use href="#logo"/></svg></button>
    <button class="tb first-gap" aria-label="Properties"><svg class="i16"><use href="#props"/></svg></button>
    <button class="tb" aria-label="Open"><svg class="i18"><use href="#open"/></svg></button>
    <button class="tb" aria-label="Save"><svg class="i16"><use href="#save"/></svg></button>
    <button class="tb" aria-label="Synchronize"><svg class="i16"><use href="#sync"/></svg></button>
    <button class="dd" aria-label="Synchronize options"><svg class="i8"><use href="#caret"/></svg></button>
    <button class="tb" aria-label="Undo"><svg class="i16"><use href="#undo"/></svg></button>
    <button class="dd" aria-label="Undo list"><svg class="i8"><use href="#caret"/></svg></button>
    <button class="tb" aria-label="Redo"><svg class="i16"><use href="#redo"/></svg></button>
    <button class="dd" aria-label="Redo list"><svg class="i8"><use href="#caret"/></svg></button>
    <button class="tb" aria-label="Print"><svg class="i16"><use href="#print"/></svg></button>
    <span class="sep"></span>
    <button class="tb" aria-label="Measure"><svg class="i16"><use href="#measure"/></svg></button>
    <button class="dd" aria-label="Measure options"><svg class="i8"><use href="#caret"/></svg></button>
    <button class="tb" aria-label="Aligned dimension"><svg class="i16"><use href="#dim"/></svg></button>
    <button class="tb" aria-label="Tag by category"><svg class="i16"><use href="#tag"/></svg></button>
    <button class="tb" aria-label="Text"><svg class="i16"><use href="#text-a"/></svg></button>
    <span class="sep"></span>
    <button class="tb" aria-label="Default 3D view"><svg class="i16"><use href="#house"/></svg></button>
    <button class="dd" aria-label="3D view options"><svg class="i8"><use href="#caret"/></svg></button>
    <button class="tb" aria-label="Section"><svg class="i16"><use href="#section"/></svg></button>
    <button class="tb active" aria-label="Thin lines"><svg class="i18"><use href="#thin"/></svg></button>
    <span class="sep"></span>
    <button class="tb" aria-label="Close hidden windows"><svg class="i16"><use href="#hidden-win"/></svg></button>
    <button class="tb" aria-label="Switch windows"><svg class="i18"><use href="#switch-win"/></svg></button>
    <button class="dd" aria-label="Window list"><svg class="i8"><use href="#caret"/></svg></button>
    <button class="dd cust" aria-label="Customize toolbar"><svg class="i10"><use href="#list-menu"/></svg></button>
  </div>
  <h1 class="title">TEST.rvt - Floor Plan: Level 1</h1>
  <div class="account">
    <button class="dd" aria-label="Collapse search"><svg class="i8"><use href="#caret-left"/></svg></button>
    <button class="tb" aria-label="Search"><svg class="i16"><use href="#binoc"/></svg></button>
    <button class="user"><svg class="i16"><use href="#user"/></svg><span>rafal.lewando...</span><svg class="i8"><use href="#caret"/></svg></button>
    <button class="tb" aria-label="App store"><svg class="i16"><use href="#cart"/></svg></button>
    <span class="sep"></span>
    <button class="tb" aria-label="Help"><svg class="i16"><use href="#help"/></svg></button>
    <button class="dd" aria-label="Help options"><svg class="i8"><use href="#caret"/></svg></button>
  </div>
  <div class="winctl">
    <button aria-label="Minimize"><svg class="i12"><use href="#w-min"/></svg></button>
    <button aria-label="Maximize"><svg class="i12"><use href="#w-max"/></svg></button>
    <button aria-label="Close"><svg class="i12"><use href="#w-close"/></svg></button>
  </div>
</header>

<nav class="tabs">
  <button class="file">File</button>
  <button class="on">Architecture</button>
  <div class="tablist"><button>Structure</button><button>Steel</button><button>Precast</button><button>Systems</button><button>Insert</button><button>Annotate</button><button>Analyze</button><button>Massing &amp; Site</button><button>Collaborate</button><button>View</button><button>Manage</button><button>Add-Ins</button><button>Quantification</button><button>Issues</button></div>
  <button class="tail" aria-label="More tabs"><svg class="i10"><use href="#more"/></svg></button>
  <button class="tail coll" aria-label="Minimize ribbon"><svg class="pill"><use href="#collapse"/></svg><svg class="i8"><use href="#caret"/></svg></button>
</nav>

<section class="ribbon">
  <div class="group g-select">
    <div class="tools"><button class="big modify"><svg class="i32"><use href="#cursor"/></svg><span>Modify</span></button></div>
    <h2>Select <svg class="i8"><use href="#caret"/></svg></h2>
  </div>
  <div class="group g-build">
    <div class="tools">
      <button class="big"><svg class="i32"><use href="#wall"/></svg><span>Wall</span><svg class="i8"><use href="#caret"/></svg></button>
      <button class="big"><svg class="i32"><use href="#door"/></svg><span>Door</span></button>
      <div class="stack">
        <button><svg class="i16"><use href="#window"/></svg>Window</button>
        <button><svg class="i16"><use href="#component"/></svg>Component<svg class="i8"><use href="#caret"/></svg></button>
        <button><svg class="i16"><use href="#column"/></svg>Column<svg class="i8"><use href="#caret"/></svg></button>
      </div>
      <div class="stack">
        <button><svg class="i16"><use href="#roof"/></svg>Roof<svg class="i8"><use href="#caret"/></svg></button>
        <button><svg class="i16"><use href="#ceiling"/></svg>Ceiling</button>
        <button><svg class="i16"><use href="#floor"/></svg>Floor<svg class="i8"><use href="#caret"/></svg></button>
      </div>
      <div class="stack">
        <button><svg class="i16"><use href="#curtain-system"/></svg>Curtain  System</button>
        <button><svg class="i16"><use href="#roof"/></svg>Curtain  Grid</button>
        <button><svg class="i16"><use href="#mullion"/></svg>Mullion</button>
      </div>
    </div>
    <h2>Build</h2>
  </div>
  <div class="group g-circ">
    <div class="tools"><div class="stack">
      <button><svg class="i16"><use href="#railing"/></svg>Railing<svg class="i8"><use href="#caret"/></svg></button>
      <button><svg class="i16"><use href="#ramp"/></svg>Ramp</button>
      <button><svg class="i16"><use href="#stair"/></svg>Stair</button>
    </div></div>
    <h2>Circulation</h2>
  </div>
  <div class="group g-model">
    <div class="tools"><div class="stack">
      <button><svg class="i16"><use href="#model-text"/></svg>Model  Text</button>
      <button><svg class="i16"><use href="#model-line"/></svg>Model  Line</button>
      <button><svg class="i16"><use href="#model-group"/></svg>Model  Group<svg class="i8"><use href="#caret"/></svg></button>
    </div></div>
    <h2>Model</h2>
  </div>
  <div class="group g-room">
    <div class="tools">
      <div class="stack">
        <button><svg class="i16"><use href="#room"/></svg>Room</button>
        <button><svg class="i16"><use href="#room-sep"/></svg>Room  Separator</button>
        <button><svg class="i16"><use href="#tag-room"/></svg>Tag  Room<svg class="i8"><use href="#caret"/></svg></button>
      </div>
      <div class="stack">
        <button><svg class="i16"><use href="#area"/></svg>Area<svg class="i8"><use href="#caret"/></svg></button>
        <button class="off" disabled><svg class="i16"><use href="#area-b"/></svg>Area  Boundary</button>
        <button><svg class="i16"><use href="#tag-area"/></svg>Tag  Area<svg class="i8"><use href="#caret"/></svg></button>
      </div>
    </div>
    <h2>Room &amp; Area <svg class="i8"><use href="#caret"/></svg></h2>
  </div>
  <div class="group g-open">
    <div class="tools">
      <button class="big"><svg class="i32"><use href="#by-face"/></svg><span>By<br>Face</span></button>
      <button class="big"><svg class="i32"><use href="#shaft"/></svg><span>Shaft</span></button>
      <div class="stack">
        <button><svg class="i16"><use href="#op-wall"/></svg>Wall</button>
        <button><svg class="i16"><use href="#op-vert"/></svg>Vertical</button>
        <button><svg class="i16"><use href="#dormer"/></svg>Dormer</button>
      </div>
    </div>
    <h2>Opening</h2>
  </div>
  <div class="group g-datum">
    <div class="tools"><div class="stack two">
      <button aria-label="Level" disabled><svg class="i16"><use href="#level"/></svg></button>
      <button aria-label="Grid"><svg class="i16"><use href="#grid-i"/></svg></button>
    </div></div>
    <h2>Datum</h2>
  </div>
  <div class="group g-plane">
    <div class="tools">
      <button class="big"><svg class="i32"><use href="#set"/></svg><span>Set</span></button>
      <div class="stack">
        <button aria-label="Show work plane"><svg class="i16"><use href="#wp-show"/></svg></button>
        <button aria-label="Reference plane"><svg class="i16"><use href="#wp-ref"/></svg></button>
        <button aria-label="Viewer"><svg class="i16"><use href="#wp-view"/></svg></button>
      </div>
    </div>
    <h2>Work Plane</h2>
  </div>
</section>
<div class="optionbar"></div>

<main class="workspace">
  <aside class="panel props">
    <header class="phead"><h2>Properties</h2><button aria-label="Close properties"><svg class="i10"><use href="#cross"/></svg></button></header>
    <button class="typesel"><span class="thumb"><svg class="i32"><use href="#floorplan-lg"/></svg></span><span class="tname">Floor Plan</span><svg class="i8"><use href="#caret"/></svg></button>
    <div class="instance">
      <span class="combo"><select aria-label="Instance"><option>Floor Plan: Level 1</option></select><svg class="i10"><use href="#thin-down"/></svg></span>
      <button class="edittype"><svg class="i16"><use href="#edit-type"/></svg>Edit Type</button>
    </div>
    <div class="gridwrap">
      <table>
        <colgroup><col class="c1"><col class="c2"><col class="c3"></colgroup>
        <thead><tr><th colspan="3"><div class="cat">Graphics<svg class="dbl"><use href="#dbl-up"/></svg></div></th></tr></thead>
        <tbody>
          <tr><td>View Scale</td><td class="edit"><input aria-label="View Scale" value="1 : 100"></td><td></td></tr>
          <tr class="dim"><td>Scale Value &nbsp;&nbsp; 1:</td><td>100</td><td></td></tr>
          <tr><td>Display Model</td><td>Normal</td><td></td></tr>
          <tr><td>Detail Level</td><td>Coarse</td><td></td></tr>
          <tr><td>Parts Visibility</td><td>Show Original</td><td></td></tr>
          <tr><td>Visibility/Graphics ...</td><td class="edit"><button>Edit...</button></td><td></td></tr>
        </tbody>
      </table>
      <div class="vscroll top">
        <button aria-label="Scroll up"><svg class="i10"><use href="#chev-up"/></svg></button>
        <div class="track"><span class="bar"></span></div>
        <button aria-label="Scroll down"><svg class="i10"><use href="#chev-down"/></svg></button>
      </div>
    </div>
    <footer class="pfoot"><a href="#help">Properties help</a><button disabled>Apply</button></footer>
  </aside>

  <aside class="panel browser">
    <header class="phead"><h2>Project Browser - TEST.rvt</h2><button aria-label="Close browser"><svg class="i10"><use href="#cross"/></svg></button></header>
    <div class="treewrap">
      <div class="tree">
        <div class="row root"><button class="box" aria-label="Collapse">−</button><span class="dash"></span><svg class="i14"><use href="#views-root"/></svg><span>Views (all)</span></div>
        <ul class="l1">
          <li>
            <div class="row"><button class="box" aria-label="Collapse">−</button><span class="dash"></span><span>Floor Plans</span></div>
            <ul class="leaves"><li class="cur">Level 1</li><li>Level 2</li><li>Site</li></ul>
          </li>
          <li>
            <div class="row"><button class="box" aria-label="Collapse">−</button><span class="dash"></span><span>Ceiling Plans</span></div>
            <ul class="leaves"><li>Level 1</li><li>Level 2</li></ul>
          </li>
          <li>
            <div class="row"><button class="box" aria-label="Expand">+</button><span class="dash"></span><span>3D Views</span></div>
          </li>
          <li>
            <div class="row"><button class="box" aria-label="Collapse">−</button><span class="dash"></span><span>Elevations (Building Elevation)</span></div>
            <ul class="leaves"><li>East</li><li>North</li><li>South</li><li>West</li></ul>
          </li>
        </ul>
      </div>
      <div class="vscroll long">
        <button aria-label="Scroll up"><svg class="i10"><use href="#chev-up"/></svg></button>
        <div class="track"><span class="bar"></span></div>
        <button aria-label="Scroll down"><svg class="i10"><use href="#chev-down"/></svg></button>
      </div>
    </div>
  </aside>

  <section class="view v-plan">
    <header class="vtabs"><div class="vtab current"><svg class="i16"><use href="#floorplan"/></svg><span>Level 1</span><button aria-label="Close view"><svg class="i10"><use href="#cross"/></svg></button></div><button class="vlist" aria-label="View list"><svg class="i10"><use href="#list-menu"/></svg></button></header>
    <div class="vbody">
      <div class="canvas">
        <svg class="drawing" viewBox="286 198 415 228" role="img" aria-label="Floor plan">
          <g fill="none" stroke="#000" shape-rendering="crispEdges">
            <path d="M376.500 353.500h-38v-84h84v41h41v43h-79M376.500 351.500h-36v-80h80v80h-36M422.500 351.500v-39h39v39h-41M420.500 310.500h2"/>
            <path d="M502.500 353.500v-84h84v41h41v43zM504.500 351.500v-80h80v80zM586.500 351.500v-39h39v39zM585.500 270v83M626.500 311v42M586.500 310v43"/>
            <path d="M541 352.500h8" stroke-width="2"/>
            <path d="M377 351v9.500" stroke-width="2"/>
            <path d="M322 365.500h327"/><path d="M649 358v8" stroke-width="2"/>
            <path d="M682.500 325.500h10v11h-10z"/>
          </g>
          <path d="M378 360.500q5-1 6.500-9M682 326l-5.500 5 5.500 5.500" fill="none" stroke="#000" stroke-width=".8"/>
          <path d="M307 365h17l-8.500-7z" fill="#003cc8"/><circle cx="315.500" cy="365.500" r="5" fill="#fff" stroke="#003cc8"/><path d="M310 365.500h11" stroke="#003cc8"/>
        </svg>
        <div class="navbar">
          <svg class="i8 end"><use href="#nav-x"/></svg>
          <button class="wheel" aria-label="Steering wheel"><svg class="i24"><use href="#wheel"/></svg><span>2D</span></button>
          <svg class="i8"><use href="#caret"/></svg><hr>
          <button class="zoomr" aria-label="Zoom region"><svg class="i18"><use href="#zoomregion"/></svg></button>
          <svg class="i8"><use href="#caret"/></svg>
          <svg class="i8 end last"><use href="#nav-min"/></svg>
        </div>
      </div>
      <div class="vscroll">
        <button aria-label="Scroll up"><svg class="i10"><use href="#chev-up"/></svg></button>
        <div class="track"><span class="bar"></span></div>
        <button aria-label="Scroll down"><svg class="i10"><use href="#chev-down"/></svg></button>
      </div>
    </div>
    <footer class="vctl">
      <button class="scale">1 : 100</button>
      <button aria-label="Detail level"><svg class="i16"><use href="#v-detail"/></svg></button>
      <button aria-label="Visual style"><svg class="i16"><use href="#v-style"/></svg></button>
      <button aria-label="Sun path"><svg class="i16"><use href="#v-sun"/></svg></button>
      <button aria-label="Shadows"><svg class="i16"><use href="#v-shadow"/></svg></button>
      <button aria-label="Crop view"><svg class="i16"><use href="#v-crop-x"/></svg></button>
      <button aria-label="Crop region"><svg class="i16"><use href="#v-crop-b"/></svg></button>
      <button aria-label="Hide or isolate"><svg class="i16"><use href="#v-glasses"/></svg></button>
      <button aria-label="Reveal hidden"><svg class="i16"><use href="#v-bulb"/></svg></button>
      <button aria-label="Temporary properties"><svg class="i16"><use href="#v-temp"/></svg></button>
      <button aria-label="Analytical model"><svg class="i16"><use href="#v-anal-y"/></svg></button>
      <button aria-label="Constraints"><svg class="i16"><use href="#v-constr"/></svg></button>
      <div class="hscroll">
        <button aria-label="Scroll left"><svg class="i10"><use href="#chev-left"/></svg></button><span class="bar"></span><button aria-label="Scroll right"><svg class="i10"><use href="#chev-right"/></svg></button>
      </div>
      <svg class="i10 grip"><use href="#grip"/></svg>
    </footer>
  </section>

  <section class="view v-3d">
    <header class="vtabs"><div class="vtab"><svg class="i16 faded"><use href="#house"/></svg><span>{3D}</span></div><button class="vlist" aria-label="View list"><svg class="i10"><use href="#list-menu"/></svg></button></header>
    <div class="vbody">
      <div class="canvas">
        <svg class="drawing" viewBox="722 198 415 228" preserveAspectRatio="xMidYMid slice" role="img" aria-label="3D view">
          <path d="M724 200h413v228h-61l-136-40.500V361h-90L724 324z" fill="#303030"/>
          <path d="M857 352h76v34l-76-23z" fill="#d8ccb8"/>
          <path d="M858 354l8 2-5 7-3-1z" fill="#8a8175"/>
          <path d="M858 200h74v177l-74-21.500z" fill="url(#g-door)"/>
          <path d="M850.500 200h7v164h-7zM932.500 200h8v188h-8z" fill="#2f1912"/>
          <path d="M850.500 200v163l3 1M857.500 200v163.500M932.500 200v187l3 1M940 200v188" fill="none" stroke="#000" stroke-width="1.300"/>
          <path d="M724 323.500l126 37M940 387.500l134 39M858 355.500l74 21.500M864 360l68 19.500M858 363l8-7M858 363l74 22.500" fill="none" stroke="#000"/>
          <ellipse cx="1108.500" cy="238" rx="18" ry="8.500" fill="none" stroke="#858585" stroke-width="4"/>
          <ellipse cx="1108.500" cy="238" rx="18" ry="8.500" fill="none" stroke="#5f5f5f" stroke-width="1"/>
          <path d="M1098 222l10-4.500 11.500 3-1 15-9.500 4.500-11-6z" fill="#8d8f91"/>
          <path d="M1098 222l10.500-4.500 11 3-9.500 5.500z" fill="#a5a7a8"/><path d="M1110 226l9.500-5.500-1 15-9 4.500z" fill="#747677"/>
          <path d="M1101 230l6 1.500M1112 231l5-2" stroke="#4e5965" stroke-width="1.500"/>
        </svg>
        <div class="navbar dark">
          <svg class="i8 end"><use href="#nav-x"/></svg>
          <button class="wheel" aria-label="Steering wheel"><svg class="i24"><use href="#wheel-3d"/></svg></button>
          <svg class="i8"><use href="#caret"/></svg><hr>
          <button class="zoomr" aria-label="Zoom region"><svg class="i18"><use href="#zoomregion-d"/></svg></button>
          <svg class="i8"><use href="#caret"/></svg>
          <svg class="i8 end last"><use href="#nav-min"/></svg>
        </div>
      </div>
      <div class="vscroll">
        <button aria-label="Scroll up"><svg class="i10"><use href="#chev-up"/></svg></button>
        <div class="track"><span class="bar"></span></div>
        <button aria-label="Scroll down"><svg class="i10"><use href="#chev-down"/></svg></button>
      </div>
    </div>
    <footer class="vctl">
      <button class="scale">1 : 100</button>
      <button aria-label="Detail level"><svg class="i16"><use href="#v-fine"/></svg></button>
      <button aria-label="Visual style"><svg class="i16"><use href="#v-style-b"/></svg></button>
      <button aria-label="Sun path"><svg class="i16"><use href="#v-sun"/></svg></button>
      <button aria-label="Shadows"><svg class="i16"><use href="#v-shadow"/></svg></button>
      <button aria-label="Rendering"><svg class="i16"><use href="#v-render"/></svg></button>
      <button aria-label="Crop view"><svg class="i16"><use href="#v-crop-x"/></svg></button>
      <button aria-label="Crop region"><svg class="i16"><use href="#v-crop-b"/></svg></button>
      <button aria-label="Lock view"><svg class="i16"><use href="#v-lock"/></svg></button>
      <button aria-label="Hide or isolate"><svg class="i16"><use href="#v-glasses"/></svg></button>
      <button aria-label="Reveal hidden"><svg class="i16"><use href="#v-bulb"/></svg></button>
      <button aria-label="Temporary properties"><svg class="i16"><use href="#v-temp"/></svg></button>
      <button aria-label="Analytical model"><svg class="i16"><use href="#v-anal-b"/></svg></button>
      <button aria-label="Displacement"><svg class="i16"><use href="#v-disp"/></svg></button>
      <button aria-label="Constraints"><svg class="i16"><use href="#v-constr"/></svg></button>
      <div class="hscroll">
        <button aria-label="Scroll left"><svg class="i10"><use href="#chev-left"/></svg></button><button aria-label="Scroll right"><svg class="i10"><use href="#chev-right"/></svg></button>
      </div>
      <svg class="i10 grip"><use href="#grip"/></svg>
    </footer>
  </section>

  <section class="view v-section">
    <header class="vtabs"><div class="vtab"><svg class="i16 faded"><use href="#section"/></svg><span>Section 1</span></div><button class="vlist" aria-label="View list"><svg class="i10"><use href="#list-menu"/></svg></button></header>
    <div class="vbody">
      <div class="canvas">
        <svg class="drawing" viewBox="286 468 851 228" role="img" aria-label="Section">
          <g fill="none" stroke="#000" shape-rendering="crispEdges">
            <path d="M288 517.500h750.500v124H288"/>
            <path d="M293 541.500h25M319 541.500h305M634 541.500h28M663 541.500h365M1039 541.500h11M1059 541.500h36"/>
            <path d="M293 618.500h331M634 618.500h28M663 618.500h365M1039 618.500h11M1059 618.500h36"/>
            <path d="M314.500 541v77M606.500 541v77M698.500 541v77M702.500 541v77M894.500 541v77M990.500 541v77M986.500 553v54M986.500 541v2M986.500 616v2"/>
            <path d="M402.500 618v-42.500h20V618M402 577.500h20M404 616.500h17M786.500 618v-42.500h20V618M787 577.500h19M788 616.500h17"/>
            <path d="M403.500 577v41M421.500 577v41M787.500 577v41M805.500 577v41"/>
          </g>
          <path d="M420.500 578.500 403.500 598l17 19" fill="none" stroke="#000" stroke-dasharray="4 6"/>
          <g fill="#fff" stroke="#003cc8"><circle cx="1001.500" cy="541" r="7.500"/><circle cx="1001.500" cy="617.500" r="7.500"/><circle cx="1095.500" cy="541" r="8"/><circle cx="1095.500" cy="617.500" r="8"/></g>
          <path d="M1001.500 541v-8a8 8 0 0 0-8 8zM1001.500 541v8a8 8 0 0 0 8-8zM1001.500 617.500v-8a8 8 0 0 0-8 8zM1001.500 617.500v8a8 8 0 0 0 8-8zM1095.500 541v-8a8 8 0 0 0-8 8zM1095.500 541v8a8 8 0 0 0 8-8zM1095.500 617.500v-8a8 8 0 0 0-8 8zM1095.500 617.500v8a8 8 0 0 0 8-8z" fill="#003cc8"/>
          <path d="M998 541.500h12M998 618.500h12" stroke="#000" shape-rendering="crispEdges"/>
          <g class="lvl" text-anchor="end">
            <text x="986" y="537">Level 2</text><text x="986" y="550">4000</text><text x="986" y="614">Level 1</text><text x="986" y="627">0</text>
            <text x="1079" y="537">Level 2</text><text x="1079" y="550">4000 mm</text><text x="1079" y="614">Level 1</text><text x="1079" y="627">0 mm</text>
          </g>
        </svg>
        <div class="navbar">
          <svg class="i8 end"><use href="#nav-x"/></svg>
          <button class="wheel" aria-label="Steering wheel"><svg class="i24"><use href="#wheel"/></svg><span>2D</span></button>
          <svg class="i8"><use href="#caret"/></svg><hr>
          <button class="zoomr" aria-label="Zoom region"><svg class="i18"><use href="#zoomregion"/></svg></button>
          <svg class="i8"><use href="#caret"/></svg>
          <svg class="i8 end last"><use href="#nav-min"/></svg>
        </div>
      </div>
      <div class="vscroll">
        <button aria-label="Scroll up"><svg class="i10"><use href="#chev-up"/></svg></button>
        <div class="track"><span class="bar"></span></div>
        <button aria-label="Scroll down"><svg class="i10"><use href="#chev-down"/></svg></button>
      </div>
    </div>
    <footer class="vctl">
      <button class="scale">1 : 100</button>
      <button aria-label="Detail level"><svg class="i16"><use href="#v-detail"/></svg></button>
      <button aria-label="Visual style"><svg class="i16"><use href="#v-style"/></svg></button>
      <button aria-label="Sun path"><svg class="i16"><use href="#v-sun"/></svg></button>
      <button aria-label="Shadows"><svg class="i16"><use href="#v-shadow"/></svg></button>
      <button aria-label="Crop view"><svg class="i16"><use href="#v-crop"/></svg></button>
      <button aria-label="Crop region"><svg class="i16"><use href="#v-crop-y"/></svg></button>
      <button aria-label="Hide or isolate"><svg class="i16"><use href="#v-glasses"/></svg></button>
      <button aria-label="Reveal hidden"><svg class="i16"><use href="#v-bulb"/></svg></button>
      <button aria-label="Temporary properties"><svg class="i16"><use href="#v-temp"/></svg></button>
      <button aria-label="Analytical model"><svg class="i16"><use href="#v-anal-b"/></svg></button>
      <button aria-label="Constraints"><svg class="i16"><use href="#v-constr"/></svg></button>
      <div class="hscroll">
        <button aria-label="Scroll left"><svg class="i10"><use href="#chev-left"/></svg></button><span class="bar"></span><button aria-label="Scroll right"><svg class="i10"><use href="#chev-right"/></svg></button>
      </div>
      <svg class="i10 grip"><use href="#grip"/></svg>
    </footer>
  </section>
</main>

<footer class="status">
  <p class="hint">Click to select, TAB for alternate</p>
  <button class="tb" aria-label="Worksets"><svg class="i16"><use href="#worksets"/></svg></button>
  <span class="combo flat"><select aria-label="Active workset"><option></option></select><svg class="i10"><use href="#thin-down"/></svg></span>
  <button class="tb" aria-label="Editing requests"><svg class="i16"><use href="#editable"/></svg></button>
  <span class="count">:0</span>
  <button class="tb" aria-label="Design options"><svg class="i16"><use href="#options"/></svg></button>
  <button class="tb" aria-label="Pick option"><svg class="i16"><use href="#pick-opt"/></svg></button>
  <span class="combo flat"><select aria-label="Design option"><option>Main Model</option></select><svg class="i10"><use href="#thin-down"/></svg></span>
  <div class="toggles">
    <button aria-label="Select links"><svg class="i16"><use href="#s-link"/></svg></button>
    <button aria-label="Select underlay"><svg class="i16"><use href="#s-under"/></svg></button>
    <button aria-label="Select pinned"><svg class="i16"><use href="#s-pin"/></svg></button>
    <button aria-label="Select by face"><svg class="i16"><use href="#s-face"/></svg></button>
    <button aria-label="Drag on selection"><svg class="i16"><use href="#s-drag"/></svg></button>
    <button aria-label="Background processes"><svg class="i16"><use href="#s-spin"/></svg></button>
    <button class="filter"><svg class="i16"><use href="#s-filter"/></svg>:0</button>
  </div>
</footer>
</body>
</html>
```
FILE: styles.css
```css
* { box-sizing: border-box; }
:root { --chrome: #cacaca; --paper: #f8f8f8; --ink: #222; }
body {
  margin: 0;
  height: 100vh;
  display: flex;
  flex-direction: column;
  overflow: hidden;
  background: var(--chrome);
  color: var(--ink);
  font: 12px/18px "Open Sans", "Segoe UI", sans-serif;
}
button, select, input { font: inherit; color: inherit; margin: 0; padding: 0; border: 0; background: none; border-radius: 0; }
button { display: inline-flex; align-items: center; justify-content: center; }
h1, h2, p, ul { margin: 0; padding: 0; font: inherit; list-style: none; }
svg { flex: none; display: block; }
.sprite { position: absolute; width: 0; height: 0; }
.i8 { width: 8px; height: 8px; color: #444; }
.i10 { width: 10px; height: 10px; color: #444; }
.i12 { width: 12px; height: 12px; }
.i14 { width: 14px; height: 14px; }
.i16 { width: 16px; height: 16px; }
.i18 { width: 18px; height: 18px; }
.i24 { width: 24px; height: 24px; }
.i32 { width: 32px; height: 32px; }

/* title bar */
.titlebar { display: flex; align-items: center; height: 34px; padding-left: 4px; flex: none; }
.qat, .account, .winctl { display: flex; align-items: center; }
.tb { width: 24px; height: 22px; }
.dd { width: 12px; height: 22px; }
.first-gap { margin-right: 5px; }
.tb.active { margin-left: 2px; border: 1px solid #0a66b8; background: #b9d8f3; }
.sep { width: 1px; height: 22px; margin: 0 2px 0 3px; background: #b4b4b4; }
.account .sep { margin: 0 5px; }
.cust { width: 18px; }
.title { flex: 1; text-align: center; white-space: nowrap; padding-bottom: 4px; }
.user { gap: 3px; height: 22px; padding: 0 3px 0 2px; }
.winctl { padding: 0 4px 0 55px; }
.winctl button { width: 25px; height: 22px; }

/* ribbon tabs */
.tabs { display: flex; height: 20px; padding-left: 4px; flex: none; }
.tabs button { padding: 0 8px; color: #333; white-space: nowrap; }
.tabs .file { width: 45px; margin-right: 3px; background: #2a7ab0; color: #fff; }
.tabs .on { background: var(--paper); padding: 0 7px 0 9px; color: #000; }
.tablist { display: flex; justify-content: space-between; flex: 0 1 906px; }
.tabs .tail { padding: 0 2px; }
.tabs .coll { gap: 3px; padding: 0 6px; }
.pill { width: 15px; height: 9px; }

/* ribbon */
.ribbon { display: flex; height: 96px; flex: none; margin: 0 2px 0 4px; background: var(--paper); border-bottom: 1px solid var(--chrome); }
.group { display: flex; flex-direction: column; padding-top: 3px; border-right: 1px solid #d4d4d4; margin-bottom: 1px; }
.group h2 { display: flex; align-items: center; justify-content: center; gap: 6px; height: 20px; }
.tools { display: flex; height: 72px; }
.big { flex-direction: column; justify-content: flex-start; line-height: 15px; padding-top: 3px; white-space: nowrap; }
.big span { padding-top: 3px; }
.big .i8 { margin-top: 1px; }
.modify { width: 44px; border: 1px solid #0a66b8; background: #b9d8f3; }
.stack { display: grid; grid-template-rows: repeat(3, 24px); justify-items: start; align-content: start; }
.stack button { gap: 5px; white-space: pre; }
.stack .off { color: #aaa; }
.stack.two { grid-template-rows: 24px 24px; padding-top: 11px; justify-items: center; width: 100%; }
.g-select { width: 57px; }
.g-select .tools { padding-left: 7px; }
.g-build .tools { display: grid; grid-template-columns: 48px 42px 106px 70px 112px; }
.g-build .big:nth-child(2) { padding-right: 6px; }
.g-circ .tools { padding-left: 7px; width: 83px; }
.g-model .tools { padding-left: 7px; width: 119px; }
.g-room .tools { padding-left: 7px; display: grid; grid-template-columns: 119px 109px; }
.g-open .tools { padding-left: 3px; display: grid; grid-template-columns: 37px 43px 68px; }
.g-open .big:nth-child(2) { padding-right: 6px; }
.g-datum { width: 47px; }
.g-plane { border: 0; flex: 1; }
.g-plane .tools { padding-left: 7px; gap: 7px; }
.g-plane h2 { justify-content: flex-start; padding-left: 5px; }
.optionbar { height: 26px; flex: none; margin: 0 2px 0 4px; background: var(--paper); }

/* workspace */
.workspace {
  flex: 1;
  min-height: 0;
  display: grid;
  grid-template-columns: 281px 1fr 1fr;
  grid-template-rows: 1fr 1fr;
  gap: 2px;
  padding: 2px 2px 0 3px;
}
.panel, .view { display: flex; flex-direction: column; min-width: 0; min-height: 0; overflow: hidden; background: var(--paper); }
.props { grid-area: 1 / 1; }
.browser { grid-area: 2 / 1; }
.v-plan { grid-area: 1 / 2; }
.v-3d { grid-area: 1 / 3; }
.v-section { grid-area: 2 / 2 / 3 / 4; }
.phead { display: flex; justify-content: space-between; align-items: center; height: 20px; flex: none; padding: 2px 5px 0 4px; }
.phead button { width: 10px; height: 18px; }
.typesel { flex: none; justify-content: flex-start; height: 72px; margin: 0 2px; padding: 0 1px 0 2px; border: 1px solid #c8c8cd; color: #333; }
.thumb { display: grid; place-items: center; width: 66px; height: 66px; border: 1px solid #c8c8cd; }
.tname { flex: 1; text-align: left; padding: 2px 0 0 4px; }
.instance { display: flex; height: 25px; padding: 1px 0 1px 2px; flex: none; }
.combo { position: relative; display: flex; width: 195px; border: 1px solid #999; background: #fcfcfc; }
.combo select { flex: 1; min-width: 0; appearance: none; padding: 0 3px; }
.combo svg { position: absolute; right: 4px; top: 7px; pointer-events: none; }
.edittype { gap: 5px; padding-left: 6px; height: 20px; }
.gridwrap { flex: 1; min-height: 0; display: flex; overflow: hidden; padding-left: 2px; }
table { flex: 1; align-self: flex-start; border-collapse: separate; border-spacing: 0; table-layout: fixed; width: 0; line-height: 17px; color: #000; }
.c1 { width: 125px; }
.c3 { width: 13px; }
th, td { padding: 0; height: 18px; text-align: left; font-weight: 400; white-space: nowrap; overflow: hidden; }
th { height: 17px; }
td { border-bottom: 1px dotted #777; border-right: 1px dotted #777; padding-left: 2px; }
td:first-child { padding-left: 8px; }
.cat { display: flex; justify-content: space-between; align-items: center; height: 17px; padding: 0 5px 0 2px; background: #d4d4d4; }
.dbl { width: 8px; height: 10px; }
td.edit { padding: 0; }
td input { display: block; width: 100%; height: 17px; border: 1px solid #000; padding-left: 4px; background: #fff; }
td button { width: 100%; height: 15px; border: 1px solid #a0a0a0; border-right-width: 2px; }
tr:last-child td { line-height: 15px; height: 16px; border-bottom: 0; }
.dim { color: #777; }
.pfoot { display: flex; justify-content: space-between; align-items: center; flex: none; height: 28px; padding: 0 4px 2px 4px; }
.pfoot a { color: #0a62c4; }
.pfoot button { width: 73px; height: 21px; border: 1px solid #aaa; background: #c8c8c8; color: #888; }

/* scroll bars */
.vscroll { display: flex; flex-direction: column; width: 17px; margin-right: 2px; flex: none; }
.vscroll button { height: 17px; }
.track { flex: 1; display: grid; align-items: center; justify-items: center; }
.bar { width: 15px; height: 17px; background: var(--chrome); }
.top .track { align-items: start; }
.long .track { align-items: start; }
.long .bar { height: 62%; }
.hscroll { flex: 1; display: flex; justify-content: space-between; align-items: center; }
.hscroll button { width: 17px; height: 17px; }
.hscroll .bar { width: 17px; height: 15px; }

/* project tree */
.treewrap { flex: 1; min-height: 0; display: flex; overflow: hidden; color: #000; }
.tree { flex: 1; overflow: hidden; margin-bottom: 3px; padding-left: 6px; }
.row { display: flex; align-items: center; height: 18px; white-space: nowrap; }
.box { width: 9px; height: 9px; flex: none; border: 1px solid #8c8c8c; background: #fff; color: #2a4a9a; font-size: 10px; line-height: 7px; }
.dash { width: 11px; border-bottom: 1px dotted #999; }
.root .dash { width: 7px; }
.root span:last-child { padding-left: 8px; }
.l1 { margin-left: 4px; padding-left: 19px; border-left: 1px dotted #999; }
.l1 > li { border-left: 1px dotted #999; }
.l1 > li > .row .box { margin-left: -5px; }
.l1 > li > .row > span:last-child { padding-left: 2px; }
.leaves { padding-left: 19px; }
.leaves li { display: flex; height: 18px; border-left: 1px dotted #999; }
.leaves li::before { content: ""; width: 14px; height: 9px; margin-right: 3px; border-bottom: 1px dotted #999; }
.leaves li:last-child { border-left-color: transparent; }
.leaves li:last-child::before { margin-left: -1px; width: 15px; border-left: 1px dotted #999; }
.cur { font-weight: 700; }

/* views */
.vtabs { display: flex; justify-content: space-between; height: 20px; flex: none; background: var(--chrome); color: #333; }
.vtab { display: flex; align-items: center; gap: 7px; width: 128px; padding: 1px 5px 0; background: var(--paper); }
.vtab button { margin-left: auto; }
.current { font-weight: 600; }
.faded { opacity: .6; }
.vlist { width: 20px; }
.vbody { flex: 1; min-height: 0; display: flex; }
.canvas { position: relative; flex: 1; min-width: 0; }
.drawing { width: 100%; height: 100%; }
.vbody .vscroll { padding-top: 2px; }
.lvl { font: 8px "Liberation Sans", Arial, sans-serif; fill: #111; }
.navbar {
  position: absolute;
  top: 2px;
  right: 1px;
  width: 35px;
  display: flex;
  flex-direction: column;
  align-items: center;
  gap: 3px;
  padding: 1px 2px;
  height: 118px;
  border: 2px solid #bbb;
  border-radius: 6px;
}
.navbar .i8 { color: #888; }
.navbar .end { align-self: flex-end; }
.navbar .last { margin-top: auto; }
.navbar hr { width: 26px; margin: 0; border: 0; border-top: 1px solid #bbb; }
.wheel { flex-direction: column; align-items: flex-end; margin-top: 6px; }
.wheel span { margin-top: -10px; color: #5b93c9; font-size: 10px; line-height: 10px; font-weight: 600; }
.zoomr { margin: 5px 0 2px; }
.dark { top: 58px; right: 2px; width: 32px; height: 114px; padding: 1px; border: 1px solid #7d7d7d; border-radius: 4px; background: #6a6a6a; }
.dark .i8 { color: #444; }
.dark hr { border-color: #444; }
.vctl { display: flex; align-items: center; height: 20px; flex: none; padding-left: 26px; padding-bottom: 2px; }
.vctl > button { width: 21px; height: 18px; }
.vctl .scale { width: 52px; justify-content: flex-start; color: #000; }
.grip { margin: 4px 4px 0 6px; }

/* status bar */
.status { display: flex; align-items: center; height: 27px; flex: none; padding: 0 31px 0 5px; color: #000; }
.hint { width: 164px; white-space: nowrap; font-size: 11px; }
.status > .tb { margin: 0 2px; }
.flat { width: 205px; height: 20px; border-color: #d4d4d4; background: var(--paper); color: #888; }
.flat .i10 { color: #aaa; top: 5px; }
.count { width: 28px; }
.toggles { margin-left: auto; display: flex; align-items: center; }
.toggles button { width: 26px; height: 20px; }
.toggles .filter { width: auto; padding-left: 2px; }
```
